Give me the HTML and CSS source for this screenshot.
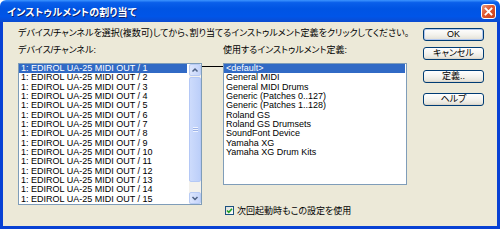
FILE: index.html
```html
<!DOCTYPE html>
<html lang="ja">
<head>
<meta charset="utf-8">
<title>インストゥルメントの割り当て</title>
<link rel="stylesheet" href="styles.css">
</head>
<body>
<div class="window">
  <div class="titlebar">
    <span class="title">インストゥルメントの割り当て</span>
    <span class="close">
      <svg width="15" height="15" viewBox="0 0 15 15"><path d="M4.5 4.5 L10.5 10.5 M10.5 4.5 L4.5 10.5" stroke="#fff" stroke-width="1.8" stroke-linecap="square"/></svg>
    </span>
  </div>
  <div class="frame">
    <div class="main">
      <div class="instr">デバイス/チャンネルを選択(複数可)してから、割り当てるインストゥルメント定義をクリックしてください。</div>
      <div class="panes">
        <div class="pane">
          <div class="label">デバイス/チャンネル:</div>
          <div class="listbox left">
            <div class="rows">
              <div class="row sel">1: EDIROL UA-25 MIDI OUT / 1</div>
              <div class="row">1: EDIROL UA-25 MIDI OUT / 2</div>
              <div class="row">1: EDIROL UA-25 MIDI OUT / 3</div>
              <div class="row">1: EDIROL UA-25 MIDI OUT / 4</div>
              <div class="row">1: EDIROL UA-25 MIDI OUT / 5</div>
              <div class="row">1: EDIROL UA-25 MIDI OUT / 6</div>
              <div class="row">1: EDIROL UA-25 MIDI OUT / 7</div>
              <div class="row">1: EDIROL UA-25 MIDI OUT / 8</div>
              <div class="row">1: EDIROL UA-25 MIDI OUT / 9</div>
              <div class="row">1: EDIROL UA-25 MIDI OUT / 10</div>
              <div class="row">1: EDIROL UA-25 MIDI OUT / 11</div>
              <div class="row">1: EDIROL UA-25 MIDI OUT / 12</div>
              <div class="row">1: EDIROL UA-25 MIDI OUT / 13</div>
              <div class="row">1: EDIROL UA-25 MIDI OUT / 14</div>
              <div class="row">1: EDIROL UA-25 MIDI OUT / 15</div>
            </div>
            <div class="scrollbar">
              <div class="sbtn"><svg width="10" height="10" viewBox="0 0 10 10"><polyline points="2.5,6.5 5,4 7.5,6.5" fill="none" stroke="#4d6185" stroke-width="1.5"/></svg></div>
              <div class="thumb"><span class="grip"></span></div>
              <div class="track"></div>
              <div class="sbtn"><svg width="10" height="10" viewBox="0 0 10 10"><polyline points="2.5,4 5,6.5 7.5,4" fill="none" stroke="#4d6185" stroke-width="1.5"/></svg></div>
            </div>
          </div>
        </div>
        <div class="connector"></div>
        <div class="pane">
          <div class="label">使用するインストゥルメント定義:</div>
          <div class="listbox right">
            <div class="rows">
              <div class="row sel focus">&lt;default&gt;</div>
              <div class="row">General MIDI</div>
              <div class="row">General MIDI Drums</div>
              <div class="row">Generic (Patches 0..127)</div>
              <div class="row">Generic (Patches 1..128)</div>
              <div class="row">Roland GS</div>
              <div class="row">Roland GS Drumsets</div>
              <div class="row">SoundFont Device</div>
              <div class="row">Yamaha XG</div>
              <div class="row">Yamaha XG Drum Kits</div>
            </div>
          </div>
          <div class="check">
            <span class="box"><svg width="7" height="7" viewBox="0 0 7 7"><polyline points="1,3.5 2.8,5.3 6,1.8" fill="none" stroke="#21a121" stroke-width="1.6"/></svg></span>
            <span class="check-label">次回起動時もこの設定を使用</span>
          </div>
        </div>
      </div>
    </div>
    <div class="buttons">
      <div class="btn default">OK</div>
      <div class="btn">キャンセル</div>
      <div class="btn gap">定義..</div>
      <div class="btn gap">ヘルプ</div>
    </div>
  </div>
</div>
</body>
</html>
```

FILE: styles.css
```css
html, body {
  margin: 0;
  padding: 0;
  background: #ffffff;
}
body {
  font-family: "Liberation Sans", "Noto Sans CJK JP", sans-serif;
  font-size: 9px;
  color: #000;
  font-feature-settings: "palt";
}
.window {
  width: 500px;
  height: 229px;
  display: flex;
  flex-direction: column;
}
.titlebar {
  height: 22px;
  display: flex;
  align-items: center;
  background: linear-gradient(to bottom, #3d95ff 0%, #0a5fea 12%, #0054e3 40%, #0055e8 75%, #0b4bd0 100%);
  border-radius: 6px 6px 0 0;
}
.title {
  margin-left: 7px;
  color: #fff;
  font-weight: bold;
  font-size: 10px;
  text-shadow: 1px 1px 0 #0a1e6e;
  letter-spacing: 0.2px;
}
.close {
  margin-left: auto;
  margin-right: 4px;
  width: 15px;
  height: 15px;
  box-sizing: border-box;
  border: 1px solid #fff;
  border-radius: 3px;
  background: linear-gradient(135deg, #e89a80 0%, #e0562d 45%, #c7401c 100%);
  display: flex;
}
.close svg { display: block; margin: -1px; }
.frame {
  flex: 1;
  display: flex;
  background: #ece9d8;
  border-style: solid;
  border-color: #0841d4;
  border-width: 0 3px 3px 3px;
  padding-left: 15px;
}
.main {
  width: 389px;
  display: flex;
  flex-direction: column;
}
.instr {
  margin-top: 5px;
  height: 12px;
  line-height: 12px;
  white-space: nowrap;
}
.panes {
  margin-top: 5px;
  display: flex;
}
.pane {
  width: 184px;
  display: flex;
  flex-direction: column;
}
.label {
  height: 12px;
  line-height: 12px;
  white-space: nowrap;
}
.connector {
  width: 21px;
  height: 1px;
  margin-top: 22px;
  background: #000;
}
.listbox {
  margin-top: 7px;
  box-sizing: border-box;
  border: 1px solid #7f9db9;
  background: #fff;
  display: flex;
}
.listbox.left { height: 142px; }
.listbox.right { height: 122px; }
.rows {
  flex: 1;
  padding-top: 0;
  overflow: hidden;
}
.row {
  height: 9.33px;
  line-height: 9.33px;
  padding-left: 2px;
  margin-right: 2px;
  white-space: nowrap;
}
.right .row { margin-right: 1px; }
.row.sel {
  background: #316ac5;
  color: #fff;
}
.scrollbar {
  width: 12px;
  display: flex;
  flex-direction: column;
  background: #f3f1ec;
}
.sbtn {
  height: 12px;
  box-sizing: border-box;
  border: 1px solid #b8cbf4;
  border-radius: 2px;
  background: linear-gradient(to right, #dde6fd, #c4d4fa);
  display: flex;
  align-items: center;
  justify-content: center;
}
.thumb {
  margin-top: 1px;
  height: 105px;
  box-sizing: border-box;
  border: 1px solid #b4c8f6;
  border-radius: 2px;
  background: linear-gradient(to right, #cddbfc, #bccff9);
  display: flex;
  align-items: center;
  justify-content: center;
}
.grip {
  width: 5px;
  height: 5px;
  background: repeating-linear-gradient(to bottom, #eef3fe 0, #eef3fe 1px, #9db3e8 1px, #9db3e8 2px);
}
.track { flex: 1; }
.check {
  margin-top: 21px;
  margin-left: 2px;
  display: flex;
  align-items: center;
  height: 9px;
}
.box {
  width: 9px;
  height: 9px;
  box-sizing: border-box;
  border: 1px solid #1c5180;
  background: linear-gradient(135deg, #dcdcd7, #fff);
  display: flex;
  align-items: center;
  justify-content: center;
}
.box svg { display: block; }
.check-label {
  margin-left: 3px;
  white-space: nowrap;
  line-height: 12px;
}
.buttons {
  margin-left: 16px;
  display: flex;
  flex-direction: column;
}
.btn {
  margin-top: 6px;
  width: 61px;
  height: 13px;
  box-sizing: border-box;
  border: 1px solid #003c74;
  border-radius: 3px;
  background: linear-gradient(to bottom, #ffffff 0%, #f4f3ee 50%, #e8e6dd 85%, #d6d0c5 100%);
  text-align: center;
  line-height: 11px;
  white-space: nowrap;
}
.btn.default {
  box-shadow: inset 0 0 0 1px #b2c8f0;
}
.btn.gap { margin-top: 10px; }
```
